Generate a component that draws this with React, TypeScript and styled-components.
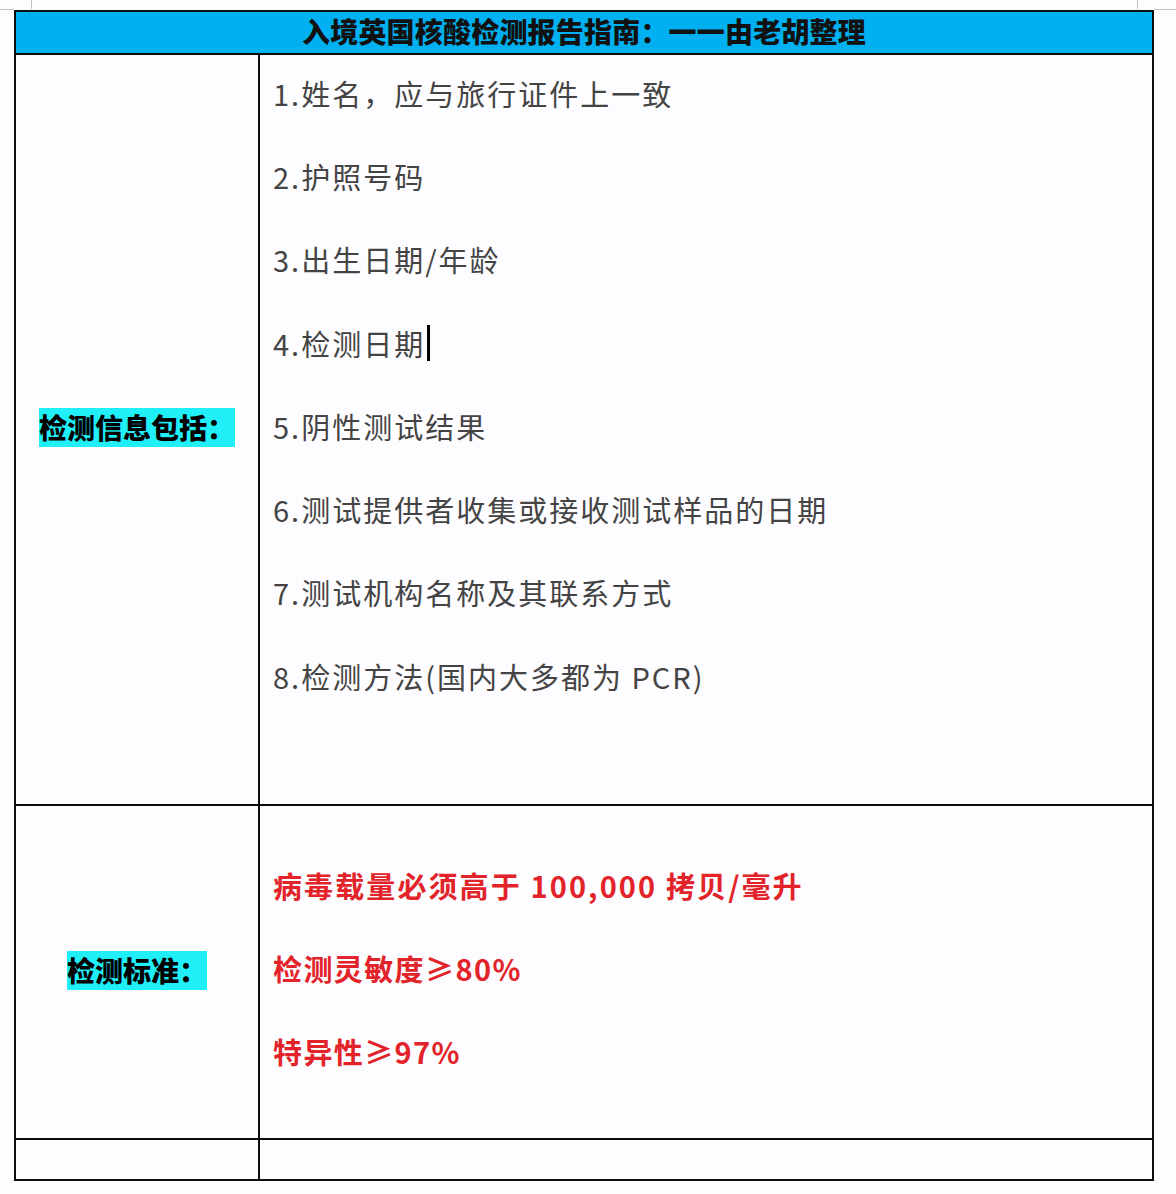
import React from 'react';
import styled, { createGlobalStyle } from 'styled-components';

const GlobalStyle = createGlobalStyle`
  html, body {
    margin: 0;
    padding: 0;
    background: #fdfcfe;
  }
  body {
    font-family: 'Noto Sans CJK SC', 'Noto Sans', sans-serif;
  }
`;

const infoItems = [
  '1.姓名，应与旅行证件上一致',
  '2.护照号码',
  '3.出生日期/年龄',
  '4.检测日期',
  '5.阴性测试结果',
  '6.测试提供者收集或接收测试样品的日期',
  '7.测试机构名称及其联系方式',
  '8.检测方法(国内大多都为 PCR)',
];

const standards = ['病毒载量必须高于 100,000 拷贝/毫升', '检测灵敏度≥80%', '特异性≥97%'];

export default function App() {
  return (
    <>
      <GlobalStyle />
      <Page>
        <MarginCorner />
        <MarginTop>
          <CropMark />
          <CropMark />
        </MarginTop>
        <MarginCorner />

        <div />
        <Sheet>
          <HeaderCell>入境英国核酸检测报告指南：一一由老胡整理</HeaderCell>

          <LabelCell>
            <Highlight>检测信息包括：</Highlight>
          </LabelCell>
          <InfoCell>
            {infoItems.map((item, i) => (
              <InfoLine key={item}>
                {item}
                {i === 3 && <Caret />}
              </InfoLine>
            ))}
          </InfoCell>

          <LabelCell>
            <Highlight>检测标准：</Highlight>
          </LabelCell>
          <StandardCell>
            {standards.map((s, i) => (
              <StandardLine key={s} $wide={i === 0}>
                {s}
              </StandardLine>
            ))}
          </StandardCell>

          <LabelCell />
          <LabelCell />
        </Sheet>
        <div />
      </Page>
    </>
  );
}

const Page = styled.div`
  display: grid;
  grid-template-columns: 14px 1140px 1fr;
  grid-template-rows: 10px auto;
  padding-bottom: 13px;
`;

const MarginCorner = styled.div`
  border-bottom: 1px solid #c4c4c4;
  height: 9px;
`;

const MarginTop = styled.div`
  display: flex;
  justify-content: space-between;
  padding: 0 16px 0 17px;
`;

const CropMark = styled.div`
  width: 1px;
  height: 9px;
  background: #c4c4c4;
`;

const Sheet = styled.div`
  display: grid;
  grid-template-columns: 242px 892px;
  grid-template-rows: 41px 749px 332px 39px;
  gap: 2px;
  padding: 2px;
  background: #0c0c0c;
`;

const HeaderCell = styled.div`
  grid-column: 1 / span 2;
  background: #00b0f0;
  display: flex;
  align-items: center;
  justify-content: center;
  font-size: 28px;
  font-weight: 900;
  color: #111;
  letter-spacing: 0.2px;
  padding-bottom: 4px;
`;

const LabelCell = styled.div`
  background: #fdfcfe;
  display: flex;
  align-items: center;
  justify-content: center;
`;

const Highlight = styled.span`
  background: #20eff8;
  font-size: 28px;
  font-weight: 900;
  line-height: 39px;
  color: #000;
  margin-top: -4px;
`;

const InfoCell = styled.div`
  background: #fdfcfe;
  display: flex;
  flex-direction: column;
  padding: 0 0 0 13px;
`;

const InfoLine = styled.div`
  display: flex;
  align-items: center;
  height: 83.3px;
  font-size: 29px;
  letter-spacing: 2px;
  color: #444;
  &:first-child {
    margin-top: -4px;
  }
`;

const Caret = styled.span`
  display: inline-block;
  width: 3px;
  height: 36px;
  background: #000;
  margin-left: 2px;
`;

const StandardCell = styled.div`
  background: #fdfcfe;
  display: flex;
  flex-direction: column;
  justify-content: center;
  padding: 0 0 8px 13px;
`;

const StandardLine = styled.div<{ $wide?: boolean }>`
  display: flex;
  align-items: center;
  height: 83px;
  font-size: 29px;
  font-weight: 700;
  letter-spacing: ${({ $wide }) => ($wide ? '2.1px' : '1.4px')};
  color: #e2232a;
`;
